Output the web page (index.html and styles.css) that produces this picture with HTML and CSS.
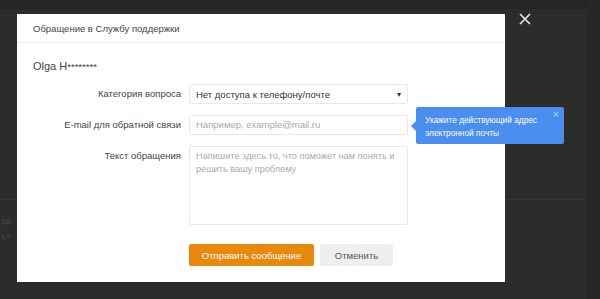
FILE: index.html
```html
<!DOCTYPE html>
<html lang="ru">
<head>
    <meta charset="UTF-8">
    <title>Обращение в Службу поддержки</title>
    <link rel="stylesheet" href="styles.css">
</head>
<body>
    <div class="page">
        <!-- dimmed page behind the overlay -->
        <div class="page-top"></div>
        <div class="page-line"></div>
        <div class="page-text">
            <span>ра</span>
            <span>кл</span>
        </div>
        <div class="page-scroll"></div>

        <div class="overlay-close" title="Закрыть">
            <svg width="12" height="12" viewBox="0 0 12 12">
                <path d="M1 1 L11 11 M11 1 L1 11" stroke="#e6e6e6" stroke-width="1.6" fill="none"/>
            </svg>
        </div>

        <!-- Support modal -->
        <div class="modal">
            <div class="modal-header">Обращение в Службу поддержки</div>
            <div class="modal-body">
                <div class="user-name">Olga H<span class="stars">********</span></div>
                <form class="support-form">
                    <label class="field-label" for="category">Категория вопроса</label>
                    <div class="select-box" id="category">
                        <span>Нет доступа к телефону/почте</span>
                        <span class="select-arrow">&#9662;</span>
                    </div>

                    <label class="field-label" for="email">E-mail для обратной связи</label>
                    <div class="input-box" id="email">Например, example@mail.ru</div>

                    <label class="field-label" for="message">Текст обращения</label>
                    <div class="textarea-box" id="message">Напишите здесь то, что поможет нам понять и<br>решить вашу проблему</div>

                    <div class="form-actions">
                        <button type="button" class="btn-send">Отправить сообщение</button>
                        <button type="button" class="btn-cancel">Отменить</button>
                    </div>
                </form>
            </div>

            <!-- validation hint -->
            <div class="hint">
                <span class="hint-close">&#215;</span>
                Укажите действующий адрес<br>электронной почты
            </div>
        </div>
    </div>
</body>
</html>
```

FILE: styles.css
```css
/* Overall page */
body {
    margin: 0;
    font-family: "Liberation Sans", Arial, sans-serif;
    background: #2c2c2b;
}

.page {
    position: relative;
    width: 600px;
    height: 299px;
    padding: 14px 0 0 17px;
    box-sizing: border-box;
    overflow: hidden;
}

/* dimmed background bits */
.page-top {
    position: absolute;
    left: 0;
    top: 0;
    width: 100%;
    height: 9px;
    background: #252525;
}

.page-line {
    position: absolute;
    left: 0;
    top: 199px;
    width: 590px;
    height: 1px;
    background: #353535;
}

.page-text {
    position: absolute;
    left: 1px;
    top: 216px;
    display: flex;
    flex-direction: column;
    gap: 5px;
    font-size: 9px;
    color: #484848;
}

.page-scroll {
    position: absolute;
    right: 0;
    top: 0;
    width: 13px;
    height: 100%;
    background: #272727;
}

.overlay-close {
    position: absolute;
    left: 519px;
    top: 13px;
    line-height: 0;
}

/* Modal */
.modal {
    position: relative;
    width: 488px;
    height: 268px;
    background: #fff;
    box-sizing: border-box;
}

.modal-header {
    height: 29px;
    padding: 0 16px;
    border-bottom: 1px solid #eeeeee;
    font-size: 9.5px;
    line-height: 30px;
    color: #444;
    box-sizing: border-box;
}

.modal-body {
    padding: 16px 16px 0;
}

.user-name {
    font-size: 11px;
    line-height: 14px;
    color: #444;
    margin-bottom: 10px;
}

.stars {
    font-size: 9.5px;
}

/* Form grid */
.support-form {
    display: grid;
    grid-template-columns: 148px 219px;
    column-gap: 8px;
    row-gap: 11px;
}

.field-label {
    text-align: right;
    font-size: 9.5px;
    color: #444;
    line-height: 20px;
}

.select-box,
.input-box,
.textarea-box {
    border: 1px solid #e8e8e8;
    border-radius: 2px;
    font-size: 9.5px;
    padding: 0 6px;
    box-sizing: border-box;
}

.select-box {
    height: 20px;
    display: flex;
    justify-content: space-between;
    align-items: center;
    color: #333;
}

.select-arrow {
    font-size: 8px;
    color: #333;
}

.input-box {
    height: 20px;
    line-height: 18px;
    color: #aaa;
}

.textarea-box {
    height: 79px;
    padding: 3px 4px 3px 6px;
    line-height: 13px;
    font-size: 9.2px;
    white-space: nowrap;
    overflow: hidden;
    color: #aaa;
}

.form-actions {
    grid-column: 2;
    display: flex;
    gap: 6px;
    margin-top: 8px;
}

.btn-send,
.btn-cancel {
    height: 22px;
    border: none;
    border-radius: 2px;
    font-family: inherit;
    font-size: 9.5px;
    padding: 0;
}

.btn-send {
    width: 125px;
    background: #e8890c;
    color: #fff;
}

.btn-cancel {
    width: 73px;
    background: #efefef;
    color: #555;
}

/* Tooltip hint */
.hint {
    position: absolute;
    left: 399px;
    top: 93px;
    width: 148px;
    height: 37px;
    padding: 7px 9px;
    box-sizing: border-box;
    background: #4a8ef0;
    border-radius: 2px;
    color: #fff;
    font-size: 8.3px;
    line-height: 13px;
}

.hint::before {
    content: "";
    position: absolute;
    left: -5px;
    top: 14px;
    border-top: 5px solid transparent;
    border-bottom: 5px solid transparent;
    border-right: 5px solid #4a8ef0;
}

.hint-close {
    position: absolute;
    right: 5px;
    top: 1px;
    font-size: 11px;
    color: #b8d2f8;
}
```
